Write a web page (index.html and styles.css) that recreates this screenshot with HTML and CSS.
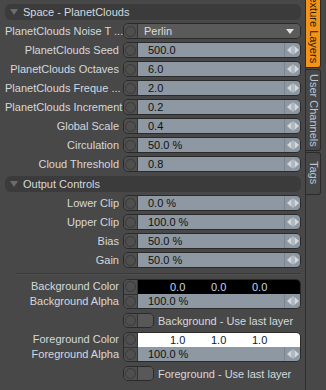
FILE: index.html
```html
<!DOCTYPE html>
<html lang="en">
<head>
  <meta charset="UTF-8">
  <title>Texture Layers - PlanetClouds</title>
  <link rel="stylesheet" href="styles.css">
</head>
<body>
  <div class="app">
    <div class="panel">
      <div class="group-head"><span class="tri"></span>Space - PlanetClouds</div>

      <div class="row">
        <div class="label">PlanetClouds Noise T ...</div>
        <div class="ctl"><span class="dot"></span><div class="popup">Perlin<span class="caret"></span></div></div>
      </div>
      <div class="row">
        <div class="label">PlanetClouds Seed</div>
        <div class="ctl"><span class="dot"></span><span class="num">500.0</span><span class="spin"><svg width="12" height="10" viewBox="0 0 12 10"><polygon points="0,5 4.5,1 4.5,9"/><rect x="5.5" y="0.5" width="1" height="9"/><polygon points="7.5,1 7.5,9 12,5"/></svg></span></div>
      </div>
      <div class="row">
        <div class="label">PlanetClouds Octaves</div>
        <div class="ctl"><span class="dot"></span><span class="num">6.0</span><span class="spin"><svg width="12" height="10" viewBox="0 0 12 10"><polygon points="0,5 4.5,1 4.5,9"/><rect x="5.5" y="0.5" width="1" height="9"/><polygon points="7.5,1 7.5,9 12,5"/></svg></span></div>
      </div>
      <div class="row">
        <div class="label">PlanetClouds Freque ...</div>
        <div class="ctl"><span class="dot"></span><span class="num">2.0</span><span class="spin"><svg width="12" height="10" viewBox="0 0 12 10"><polygon points="0,5 4.5,1 4.5,9"/><rect x="5.5" y="0.5" width="1" height="9"/><polygon points="7.5,1 7.5,9 12,5"/></svg></span></div>
      </div>
      <div class="row">
        <div class="label">PlanetClouds Increment</div>
        <div class="ctl"><span class="dot"></span><span class="num">0.2</span><span class="spin"><svg width="12" height="10" viewBox="0 0 12 10"><polygon points="0,5 4.5,1 4.5,9"/><rect x="5.5" y="0.5" width="1" height="9"/><polygon points="7.5,1 7.5,9 12,5"/></svg></span></div>
      </div>
      <div class="row">
        <div class="label">Global Scale</div>
        <div class="ctl"><span class="dot"></span><span class="num">0.4</span><span class="spin"><svg width="12" height="10" viewBox="0 0 12 10"><polygon points="0,5 4.5,1 4.5,9"/><rect x="5.5" y="0.5" width="1" height="9"/><polygon points="7.5,1 7.5,9 12,5"/></svg></span></div>
      </div>
      <div class="row">
        <div class="label">Circulation</div>
        <div class="ctl"><span class="dot"></span><span class="num">50.0 %</span><span class="spin"><svg width="12" height="10" viewBox="0 0 12 10"><polygon points="0,5 4.5,1 4.5,9"/><rect x="5.5" y="0.5" width="1" height="9"/><polygon points="7.5,1 7.5,9 12,5"/></svg></span></div>
      </div>
      <div class="row">
        <div class="label">Cloud Threshold</div>
        <div class="ctl"><span class="dot"></span><span class="num">0.8</span><span class="spin"><svg width="12" height="10" viewBox="0 0 12 10"><polygon points="0,5 4.5,1 4.5,9"/><rect x="5.5" y="0.5" width="1" height="9"/><polygon points="7.5,1 7.5,9 12,5"/></svg></span></div>
      </div>

      <div class="group-head"><span class="tri"></span>Output Controls</div>

      <div class="row">
        <div class="label">Lower Clip</div>
        <div class="ctl"><span class="dot"></span><span class="num">0.0 %</span><span class="spin"><svg width="12" height="10" viewBox="0 0 12 10"><polygon points="0,5 4.5,1 4.5,9"/><rect x="5.5" y="0.5" width="1" height="9"/><polygon points="7.5,1 7.5,9 12,5"/></svg></span></div>
      </div>
      <div class="row">
        <div class="label">Upper Clip</div>
        <div class="ctl"><span class="dot"></span><span class="num">100.0 %</span><span class="spin"><svg width="12" height="10" viewBox="0 0 12 10"><polygon points="0,5 4.5,1 4.5,9"/><rect x="5.5" y="0.5" width="1" height="9"/><polygon points="7.5,1 7.5,9 12,5"/></svg></span></div>
      </div>
      <div class="row">
        <div class="label">Bias</div>
        <div class="ctl"><span class="dot"></span><span class="num">50.0 %</span><span class="spin"><svg width="12" height="10" viewBox="0 0 12 10"><polygon points="0,5 4.5,1 4.5,9"/><rect x="5.5" y="0.5" width="1" height="9"/><polygon points="7.5,1 7.5,9 12,5"/></svg></span></div>
      </div>
      <div class="row">
        <div class="label">Gain</div>
        <div class="ctl"><span class="dot"></span><span class="num">50.0 %</span><span class="spin"><svg width="12" height="10" viewBox="0 0 12 10"><polygon points="0,5 4.5,1 4.5,9"/><rect x="5.5" y="0.5" width="1" height="9"/><polygon points="7.5,1 7.5,9 12,5"/></svg></span></div>
      </div>

      <div class="sep"></div>

      <div class="cgroup">
        <div class="clabels"><div>Background Color</div><div>Background Alpha</div></div>
        <div class="cctl">
          <div class="cdots"><span class="dot"></span><span class="dot"></span></div>
          <div class="cvals">
            <div class="swatch black"><span>0.0</span><span>0.0</span><span>0.0</span></div>
            <div class="alpha"><span class="num">100.0 %</span><span class="spin"><svg width="12" height="10" viewBox="0 0 12 10"><polygon points="0,5 4.5,1 4.5,9"/><rect x="5.5" y="0.5" width="1" height="9"/><polygon points="7.5,1 7.5,9 12,5"/></svg></span></div>
          </div>
        </div>
      </div>
      <div class="chk">
        <span class="toggle"><span class="dot"></span><span class="box"></span></span>
        <span class="chk-label">Background - Use last layer</span>
      </div>

      <div class="cgroup">
        <div class="clabels"><div>Foreground Color</div><div>Foreground Alpha</div></div>
        <div class="cctl">
          <div class="cdots"><span class="dot"></span><span class="dot"></span></div>
          <div class="cvals">
            <div class="swatch white"><span>1.0</span><span>1.0</span><span>1.0</span></div>
            <div class="alpha"><span class="num">100.0 %</span><span class="spin"><svg width="12" height="10" viewBox="0 0 12 10"><polygon points="0,5 4.5,1 4.5,9"/><rect x="5.5" y="0.5" width="1" height="9"/><polygon points="7.5,1 7.5,9 12,5"/></svg></span></div>
          </div>
        </div>
      </div>
      <div class="chk">
        <span class="toggle"><span class="dot"></span><span class="box"></span></span>
        <span class="chk-label">Foreground - Use last layer</span>
      </div>
    </div>

    <div class="tabs">
      <div class="tab on">Texture Layers</div>
      <div class="tab">User Channels</div>
      <div class="tab">Tags</div>
    </div>
  </div>
</body>
</html>
```

FILE: styles.css
```css
body {
  margin: 0;
  background: #484848;
  font: 11px "Liberation Sans", Arial, sans-serif;
  color: #d5d9dd;
}

.app {
  display: flex;
  height: 390px;
  overflow: hidden;
}

.panel {
  width: 296px;
  padding: 4px 4px 0 5px;
}

/* collapsible group header */
.group-head {
  height: 16px;
  background: #3b3b3b;
  border-radius: 6px;
  display: flex;
  align-items: center;
  padding-left: 5px;
  margin-top: 4px;
}
.group-head:first-child {
  margin-top: 0;
}
.tri {
  width: 0;
  height: 0;
  border-left: 4px solid transparent;
  border-right: 4px solid transparent;
  border-top: 6px solid #6c6c6c;
  margin-right: 5px;
}

.row {
  display: flex;
  align-items: center;
  height: 16px;
  margin-top: 3px;
}
.label {
  width: 114px;
  text-align: right;
  white-space: nowrap;
}

.ctl {
  margin-left: 4px;
  width: 178px;
  height: 16px;
  box-sizing: border-box;
  border: 1px solid #2a2a2a;
  border-radius: 5px;
  display: flex;
  overflow: hidden;
}

.dot {
  width: 13px;
  background: #4f4f4f;
  border-right: 1px solid #333;
  display: flex;
  align-items: center;
  justify-content: center;
}
.dot::before {
  content: "";
  width: 9px;
  height: 9px;
  border-radius: 50%;
  border: 1px solid #3a3a3a;
}

.num {
  flex: 1;
  background: #8e98a2;
  color: #101010;
  padding-left: 10px;
  line-height: 14px;
}
.spin {
  width: 15px;
  background: #8e98a2;
  border-left: 1px solid #7b858e;
  display: flex;
  align-items: center;
  justify-content: center;
}
.spin svg {
  fill: #d3d8dd;
}

.popup {
  flex: 1;
  background: #5a5a5a;
  color: #dcdcdc;
  padding-left: 6px;
  display: flex;
  align-items: center;
  justify-content: space-between;
}
.caret {
  width: 0;
  height: 0;
  border-left: 4px solid transparent;
  border-right: 4px solid transparent;
  border-top: 5px solid #e2e2e2;
  margin-right: 6px;
}

.sep {
  margin: 5px 0 0 11px;
  border-top: 1px solid #3a3a3a;
  border-bottom: 1px solid #505050;
}

/* colour + alpha pair */
.cgroup {
  display: flex;
  margin-top: 4px;
}
.clabels {
  width: 114px;
  text-align: right;
  white-space: nowrap;
}
.clabels div {
  height: 15px;
  line-height: 15px;
}
.cctl {
  margin-left: 4px;
  width: 178px;
  height: 30px;
  box-sizing: border-box;
  border: 1px solid #2a2a2a;
  border-radius: 5px;
  display: flex;
  overflow: hidden;
}
.cdots {
  display: flex;
  flex-direction: column;
}
.cdots .dot {
  flex: 1;
}
.cdots .dot:first-child {
  border-bottom: 1px solid #333;
}
.cvals {
  flex: 1;
  display: flex;
  flex-direction: column;
}
.swatch {
  height: 14px;
  line-height: 14px;
  padding-left: 32px;
  display: grid;
  grid-template-columns: repeat(3, 41px);
}
.swatch.black {
  background: #000;
  color: #c6d6ea;
}
.swatch.white {
  background: #fff;
  color: #0c1a38;
}
.alpha {
  flex: 1;
  display: flex;
}

/* checkbox toggle */
.chk {
  display: flex;
  align-items: center;
  height: 15px;
  margin-top: 4px;
  padding-left: 118px;
}
.toggle {
  width: 31px;
  height: 15px;
  box-sizing: border-box;
  border: 1px solid #2a2a2a;
  border-radius: 5px;
  display: flex;
  overflow: hidden;
}
.toggle .box {
  flex: 1;
  background: #585858;
}
.chk-label {
  margin-left: 4px;
  white-space: nowrap;
}

/* side tabs */
.tabs {
  width: 21px;
  border-left: 1px solid #2c2c2c;
  display: flex;
  flex-direction: column;
}
.tab {
  width: 15px;
  box-sizing: border-box;
  border: 1px solid #2a2a2a;
  border-left: none;
  border-radius: 0 3px 3px 0;
  background: #474747;
  color: #b8c6d8;
  writing-mode: vertical-rl;
  white-space: nowrap;
  padding: 4px 0 0 1px;
  height: 82px;
  margin-top: 1px;
}
.tab.on {
  background: #f39419;
  color: #2b1b05;
  margin-top: -10px;
  height: 78px;
  padding-top: 0;
  overflow: hidden;
}
.tab:last-child {
  height: 43px;
  padding-top: 8px;
}
```
